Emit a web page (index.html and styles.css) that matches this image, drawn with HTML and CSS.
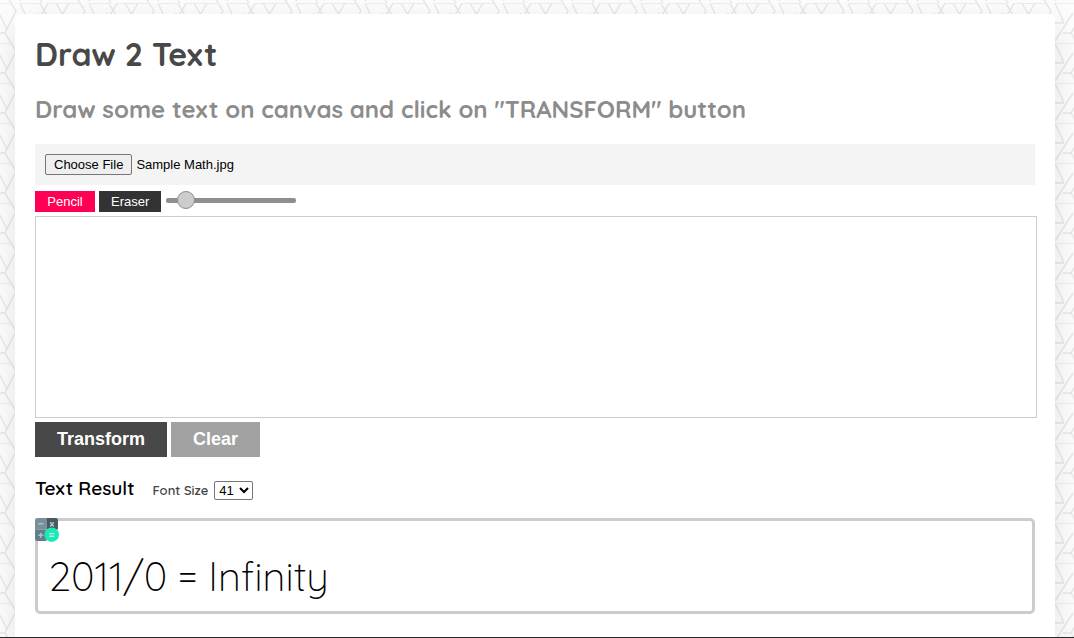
FILE: index.html
```html
<!DOCTYPE html>
<html lang="en">
<head>
<meta charset="utf-8">
<meta name="viewport" content="width=device-width, initial-scale=1">
<title>Draw 2 Text</title>
<link rel="stylesheet" href="styles.css">
</head>
<body>
<svg class="backdrop" aria-hidden="true">
  <defs>
    <pattern id="weave" width="69" height="40" patternUnits="userSpaceOnUse" patternTransform="translate(0 3)">
      <path d="M0 0H12M22 0H39M48 0H69M20 20H29M28 30H36M38 10L20 38M20 0L29 20M43 18L36 30L43 42M16 8L5 30L11 40M0 30H5M0 12L7 26M11 0L16 8M38 -3L48 14M50 -3L40 14M56 0L64 14M69 0L61 14" fill="none" stroke="#e8e8e8" stroke-width="1.500"/>
    </pattern>
  </defs>
  <rect width="100%" height="100%" fill="url(#weave)"/>
</svg>
<main class="card">
  <h1 class="title">Draw 2 Text</h1>
  <h2 class="subtitle">Draw some text on canvas and click on "TRANSFORM" button</h2>
  <div class="upload">
    <button class="choose" type="button">Choose File</button>
    <span class="filename">Sample Math.jpg</span>
  </div>
  <div class="tools">
    <button class="tool tool-active" type="button">Pencil</button>
    <button class="tool" type="button">Eraser</button>
    <input class="thickness" type="range" min="0" max="100" value="10" aria-label="Thickness">
  </div>
  <canvas class="board"></canvas>
  <div class="actions">
    <button class="action" type="button">Transform</button>
    <button class="action action-clear" type="button">Clear</button>
  </div>
  <div class="result-head">
    <h3 class="result-title">Text Result</h3>
    <label class="size-label" for="size">Font Size</label>
    <select class="size" id="size"><option>41</option></select>
  </div>
  <section class="result">
    <svg class="calc" viewBox="0 0 24 24" aria-hidden="true">
      <path d="M3 1H12V12H1V3Q1 1 3 1Z" fill="#78909c"/>
      <path d="M12 1H21Q23 1 23 3V12H12Z" fill="#455a64"/>
      <path d="M1 12H12V23H3Q1 23 1 21Z" fill="#607d8b"/>
      <path d="M4 6.500H9M4 17.500H9M6.500 15V20M15.500 5L19 9M19 5L15.500 9" stroke="#b0bec5" stroke-width="1.500"/>
      <circle cx="17" cy="17" r="7" fill="#1de9b6"/>
      <path d="M14.500 16H19.500M14.500 18.500H19.500" stroke="#a0f8e0" stroke-width="1.300"/>
    </svg>
    <output class="answer">2011/0 = Infinity</output>
  </section>
</main>
<footer class="taskline"></footer>
</body>
</html>
```
FILE: styles.css
```css
* { box-sizing: border-box; }
html { height: 100%; }
body {
  display: flex;
  flex-direction: column;
  min-height: 100%;
  margin: 0;
  padding-top: 14px;
  background: #fcfcfc;
  color: #000;
  font-family: Quicksand, Lato, sans-serif;
  overflow: hidden;
}
.backdrop {
  position: absolute;
  inset: 0;
  z-index: -1;
  width: 100%;
  height: 100%;
}
.card {
  flex: 1;
  margin: 0 19px 0 15px;
  padding: 20px 20px 16px;
  border-radius: 5px 5px 0 0;
  background: #fff;
  box-shadow: 0 10px 30px rgba(0, 0, 0, 0.1);
}
.title {
  margin: 0;
  color: #484848;
  font-size: 32px;
  line-height: 40px;
}
.subtitle {
  margin: 20px 0 19px;
  color: #8c8c8c;
  font-size: 24px;
  line-height: 31px;
}
.upload {
  display: flex;
  align-items: center;
  gap: 4px;
  height: 41px;
  padding: 0 10px;
  background: #f4f4f4;
  font: 13px "Liberation Sans", Arial, sans-serif;
}
.choose {
  height: 21px;
  padding: 0 8px;
  border: 1px solid #767676;
  border-radius: 2px;
  background: #efefef;
  color: #000;
  font: inherit;
}
.tools {
  display: flex;
  gap: 4px;
  margin: 6px 0 4px;
}
.tool {
  min-width: 60px;
  height: 21px;
  padding: 0 12px;
  border: 0;
  background: #333;
  color: #fff;
  font: 13px "Liberation Sans", Arial, sans-serif;
}
.tool-active { background: #ff0055; }
.thickness {
  appearance: none;
  width: 130px;
  height: 19px;
  margin: 0 0 0 1px;
  background: transparent;
}
.thickness::-webkit-slider-runnable-track {
  height: 5px;
  border-radius: 2px;
  background: #8e8e8e;
}
.thickness::-webkit-slider-thumb {
  appearance: none;
  width: 18px;
  height: 18px;
  margin-top: -7px;
  border: 1px solid #8e8e8e;
  border-radius: 50%;
  background: #ccc;
}
.board {
  display: block;
  width: calc(100% + 2px);
  height: 202px;
  border: 1px solid #ccc;
}
.actions {
  display: flex;
  gap: 4px;
  margin-top: 4px;
}
.action {
  height: 35px;
  padding: 0 22px;
  border: 0;
  background: #484848;
  color: #fff;
  font: bold 18px "Liberation Sans", Arial, sans-serif;
}
.action-clear { background: #a2a2a2; }
.result-head {
  display: flex;
  align-items: baseline;
  margin: 19px 0 18px;
}
.result-title {
  margin: 0 18px 0 0;
  font-size: 19px;
  font-weight: 600;
  line-height: 24px;
}
.size-label {
  margin-right: 6px;
  color: #444;
  font-size: 13px;
  font-weight: 600;
}
.size {
  width: 39px;
  height: 19px;
  padding: 0;
  border: 1px solid #767676;
  border-radius: 2px;
  background: #fff;
  color: #000;
  font: 13px "Liberation Sans", Arial, sans-serif;
}
.result {
  position: relative;
  padding: 31px 11px 10px;
  border: 3px solid #ccc;
  border-radius: 5px;
}
.calc {
  position: absolute;
  top: -4px;
  left: -4px;
  width: 25px;
  height: 25px;
}
.answer {
  display: block;
  font-size: 40px;
  font-weight: 300;
  line-height: 49px;
}
.taskline {
  height: 1px;
  background: #28292c;
}
```
